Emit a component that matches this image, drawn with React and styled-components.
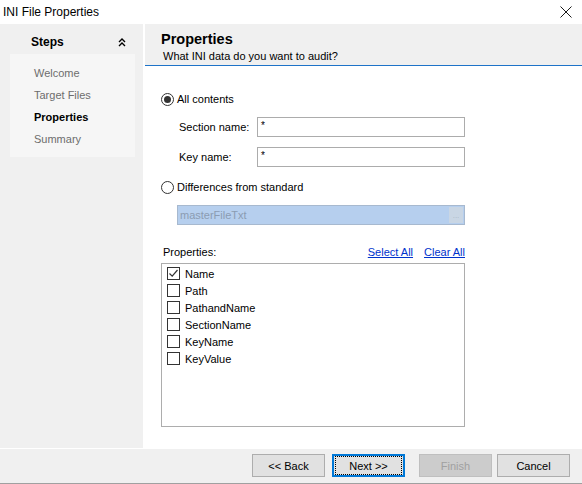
import styled, { createGlobalStyle } from "styled-components";

const GlobalStyle = createGlobalStyle`
  html, body {
    margin: 0;
    padding: 0;
    background: #ffffff;
  }
  body {
    font-family: "Liberation Sans", Arial, sans-serif;
    font-size: 11px;
    color: #000;
  }
`;

const steps = [
  { label: "Welcome" },
  { label: "Target Files" },
  { label: "Properties", active: true },
  { label: "Summary" },
];

const props = [
  { label: "Name", checked: true },
  { label: "Path" },
  { label: "PathandName" },
  { label: "SectionName" },
  { label: "KeyName" },
  { label: "KeyValue" },
];

export default function App() {
  return (
    <>
      <GlobalStyle />
      <Window>
        <TitleBar>
          <Title>INI File Properties</Title>
          <CloseIcon viewBox="0 0 12 12">
            <path d="M0.5 0.5 L11.5 11.5 M11.5 0.5 L0.5 11.5" stroke="#1a1a1a" strokeWidth="1" fill="none" />
          </CloseIcon>
        </TitleBar>
        <Body>
          <Sidebar>
            <StepsHeader>
              <span>Steps</span>
              <Chevron viewBox="0 0 8 9">
                <path d="M1 4 L4 1 L7 4 M1 8 L4 5 L7 8" stroke="#000" strokeWidth="1.4" fill="none" />
              </Chevron>
            </StepsHeader>
            <StepsList>
              {steps.map((s) => (
                <StepItem key={s.label} $active={s.active}>
                  {s.label}
                </StepItem>
              ))}
            </StepsList>
          </Sidebar>
          <Main>
            <Header>
              <HeaderTitle>Properties</HeaderTitle>
              <HeaderSub>What INI data do you want to audit?</HeaderSub>
            </Header>
            <Content>
              <RadioRow>
                <Radio $checked />
                <span>All contents</span>
              </RadioRow>
              <FieldRow $mt={10}>
                <FieldLabel>Section name:</FieldLabel>
                <TextBox>*</TextBox>
              </FieldRow>
              <FieldRow $mt={10}>
                <FieldLabel>Key name:</FieldLabel>
                <TextBox>*</TextBox>
              </FieldRow>
              <RadioRow $mt={12}>
                <Radio />
                <span>Differences from standard</span>
              </RadioRow>
              <DisabledBox>
                <span>masterFileTxt</span>
                <BrowseButton>...</BrowseButton>
              </DisabledBox>
              <ListHeader>
                <span>Properties:</span>
                <Links>
                  <LinkText>Select All</LinkText>
                  <LinkText>Clear All</LinkText>
                </Links>
              </ListHeader>
              <ListBox>
                {props.map((p) => (
                  <ListItem key={p.label}>
                    <CheckBox>
                      {p.checked && (
                        <svg width="11" height="11" viewBox="0 0 11 11">
                          <path d="M1.5 5.5 L4.2 8.2 L9.5 2" stroke="#333" strokeWidth="1.2" fill="none" />
                        </svg>
                      )}
                    </CheckBox>
                    <span>{p.label}</span>
                  </ListItem>
                ))}
              </ListBox>
            </Content>
          </Main>
        </Body>
        <Footer>
          <Button>&lt;&lt; Back</Button>
          <Button $ml={7} $focused>
            <FocusRing>Next &gt;&gt;</FocusRing>
          </Button>
          <Button $ml={14} $disabled>Finish</Button>
          <Button $ml={5}>Cancel</Button>
        </Footer>
      </Window>
    </>
  );
}

const Window = styled.div`
  width: 582px;
  height: 484px;
  display: flex;
  flex-direction: column;
  background: #fff;
  overflow: hidden;
`;

const TitleBar = styled.div`
  height: 24px;
  display: flex;
  align-items: center;
  justify-content: space-between;
  padding: 0 10px 0 3px;
  background: #fff;
`;

const Title = styled.span`
  font-size: 12px;
  color: #000;
`;

const CloseIcon = styled.svg`
  width: 12px;
  height: 12px;
`;

const Body = styled.div`
  flex: 1;
  display: flex;
  min-height: 0;
`;

const Sidebar = styled.div`
  width: 143px;
  margin-right: 2px;
  background: #f0f0f0;
  display: flex;
  flex-direction: column;
`;

const StepsHeader = styled.div`
  height: 30px;
  box-sizing: border-box;
  padding: 6px 17px 0 31px;
  display: flex;
  align-items: center;
  justify-content: space-between;
  font-size: 12px;
  font-weight: bold;
`;

const Chevron = styled.svg`
  width: 8px;
  height: 9px;
`;

const StepsList = styled.div`
  margin: 0 8px 0 10px;
  padding: 8px 0 7px 24px;
  background: #f6f6f6;
  display: flex;
  flex-direction: column;
`;

const StepItem = styled.div`
  height: 22px;
  display: flex;
  align-items: center;
  font-size: 11px;
  color: ${(p) => (p.$active ? "#000" : "#6d6d6d")};
  font-weight: ${(p) => (p.$active ? "bold" : "normal")};
`;

const Main = styled.div`
  flex: 1;
  display: flex;
  flex-direction: column;
`;

const Header = styled.div`
  height: 42px;
  box-sizing: border-box;
  background: #f0f0f0;
  border-bottom: 1px solid #1e73c8;
  padding: 6px 0 0 16px;
  display: flex;
  flex-direction: column;
`;

const HeaderTitle = styled.div`
  font-size: 14.5px;
  font-weight: bold;
  line-height: 18px;
`;

const HeaderSub = styled.div`
  font-size: 11px;
  line-height: 14px;
  margin: 1px 0 0 2px;
`;

const Content = styled.div`
  flex: 1;
  background: #fff;
  padding: 25px 0 0 16px;
  display: flex;
  flex-direction: column;
  width: 304px;
`;

const RadioRow = styled.div`
  height: 16px;
  display: flex;
  align-items: center;
  gap: 3px;
  margin-top: ${(p) => p.$mt || 0}px;
`;

const Radio = styled.span`
  width: 11px;
  height: 11px;
  border: 1px solid #333;
  border-radius: 50%;
  display: flex;
  align-items: center;
  justify-content: center;
  background: #fff;
  &::after {
    content: "";
    display: ${(p) => (p.$checked ? "block" : "none")};
    width: 7px;
    height: 7px;
    border-radius: 50%;
    background: #333;
  }
`;

const FieldRow = styled.div`
  display: flex;
  align-items: center;
  margin-top: ${(p) => p.$mt || 0}px;
  padding-left: 18px;
`;

const FieldLabel = styled.span`
  width: 78px;
`;

const TextBox = styled.div`
  flex: 1;
  height: 20px;
  box-sizing: border-box;
  border: 1px solid #acacac;
  padding: 2px 3px;
  font-size: 10px;
`;

const DisabledBox = styled.div`
  margin: 10px 0 0 16px;
  height: 20px;
  box-sizing: border-box;
  border: 1px solid #a7b9cf;
  background: #b6cfee;
  display: flex;
  align-items: center;
  justify-content: space-between;
  padding-left: 2px;
  color: #8b9cb2;
`;

const BrowseButton = styled.span`
  width: 14px;
  height: 16px;
  margin-right: 1px;
  background: #c9d6e4;
  color: #a9b6c4;
  font-size: 8px;
  display: flex;
  align-items: center;
  justify-content: center;
`;

const ListHeader = styled.div`
  margin-top: 19px;
  height: 16px;
  display: flex;
  align-items: center;
  justify-content: space-between;
  padding-left: 2px;
`;

const Links = styled.div`
  display: flex;
  gap: 11px;
`;

const LinkText = styled.span`
  color: #0033cc;
  text-decoration: underline;
`;

const ListBox = styled.div`
  margin-top: 3px;
  height: 164px;
  box-sizing: border-box;
  border: 1px solid #adadad;
  padding: 1px 0 0 5px;
  display: flex;
  flex-direction: column;
`;

const ListItem = styled.div`
  height: 17px;
  display: flex;
  align-items: center;
  gap: 5px;
`;

const CheckBox = styled.span`
  width: 13px;
  height: 13px;
  box-sizing: border-box;
  border: 1px solid #333;
  background: #fff;
  display: flex;
  align-items: center;
  justify-content: center;
`;

const Footer = styled.div`
  height: 36px;
  box-sizing: border-box;
  background: #f0f0f0;
  border-top: 1px solid #fff;
  border-bottom: 1px solid #a0a0a0;
  display: flex;
  align-items: center;
  justify-content: flex-end;
  padding: 0 12px 1px 0;
`;

const Button = styled.div`
  width: 73px;
  height: 23px;
  box-sizing: border-box;
  margin-left: ${(p) => p.$ml || 0}px;
  display: flex;
  align-items: center;
  justify-content: center;
  background: ${(p) => (p.$disabled ? "#cccccc" : "#e1e1e1")};
  border: ${(p) => (p.$focused ? "2px solid #0078d7" : "1px solid #adadad")};
  color: ${(p) => (p.$disabled ? "#a0a0a0" : "#000")};
  font-size: 11px;
  ${(p) => p.$disabled && "border-color: #bfbfbf;"}
`;

const FocusRing = styled.span`
  width: 100%;
  height: 100%;
  margin: 1px;
  box-sizing: border-box;
  border: 1px dotted #000;
  display: flex;
  align-items: center;
  justify-content: center;
`;
